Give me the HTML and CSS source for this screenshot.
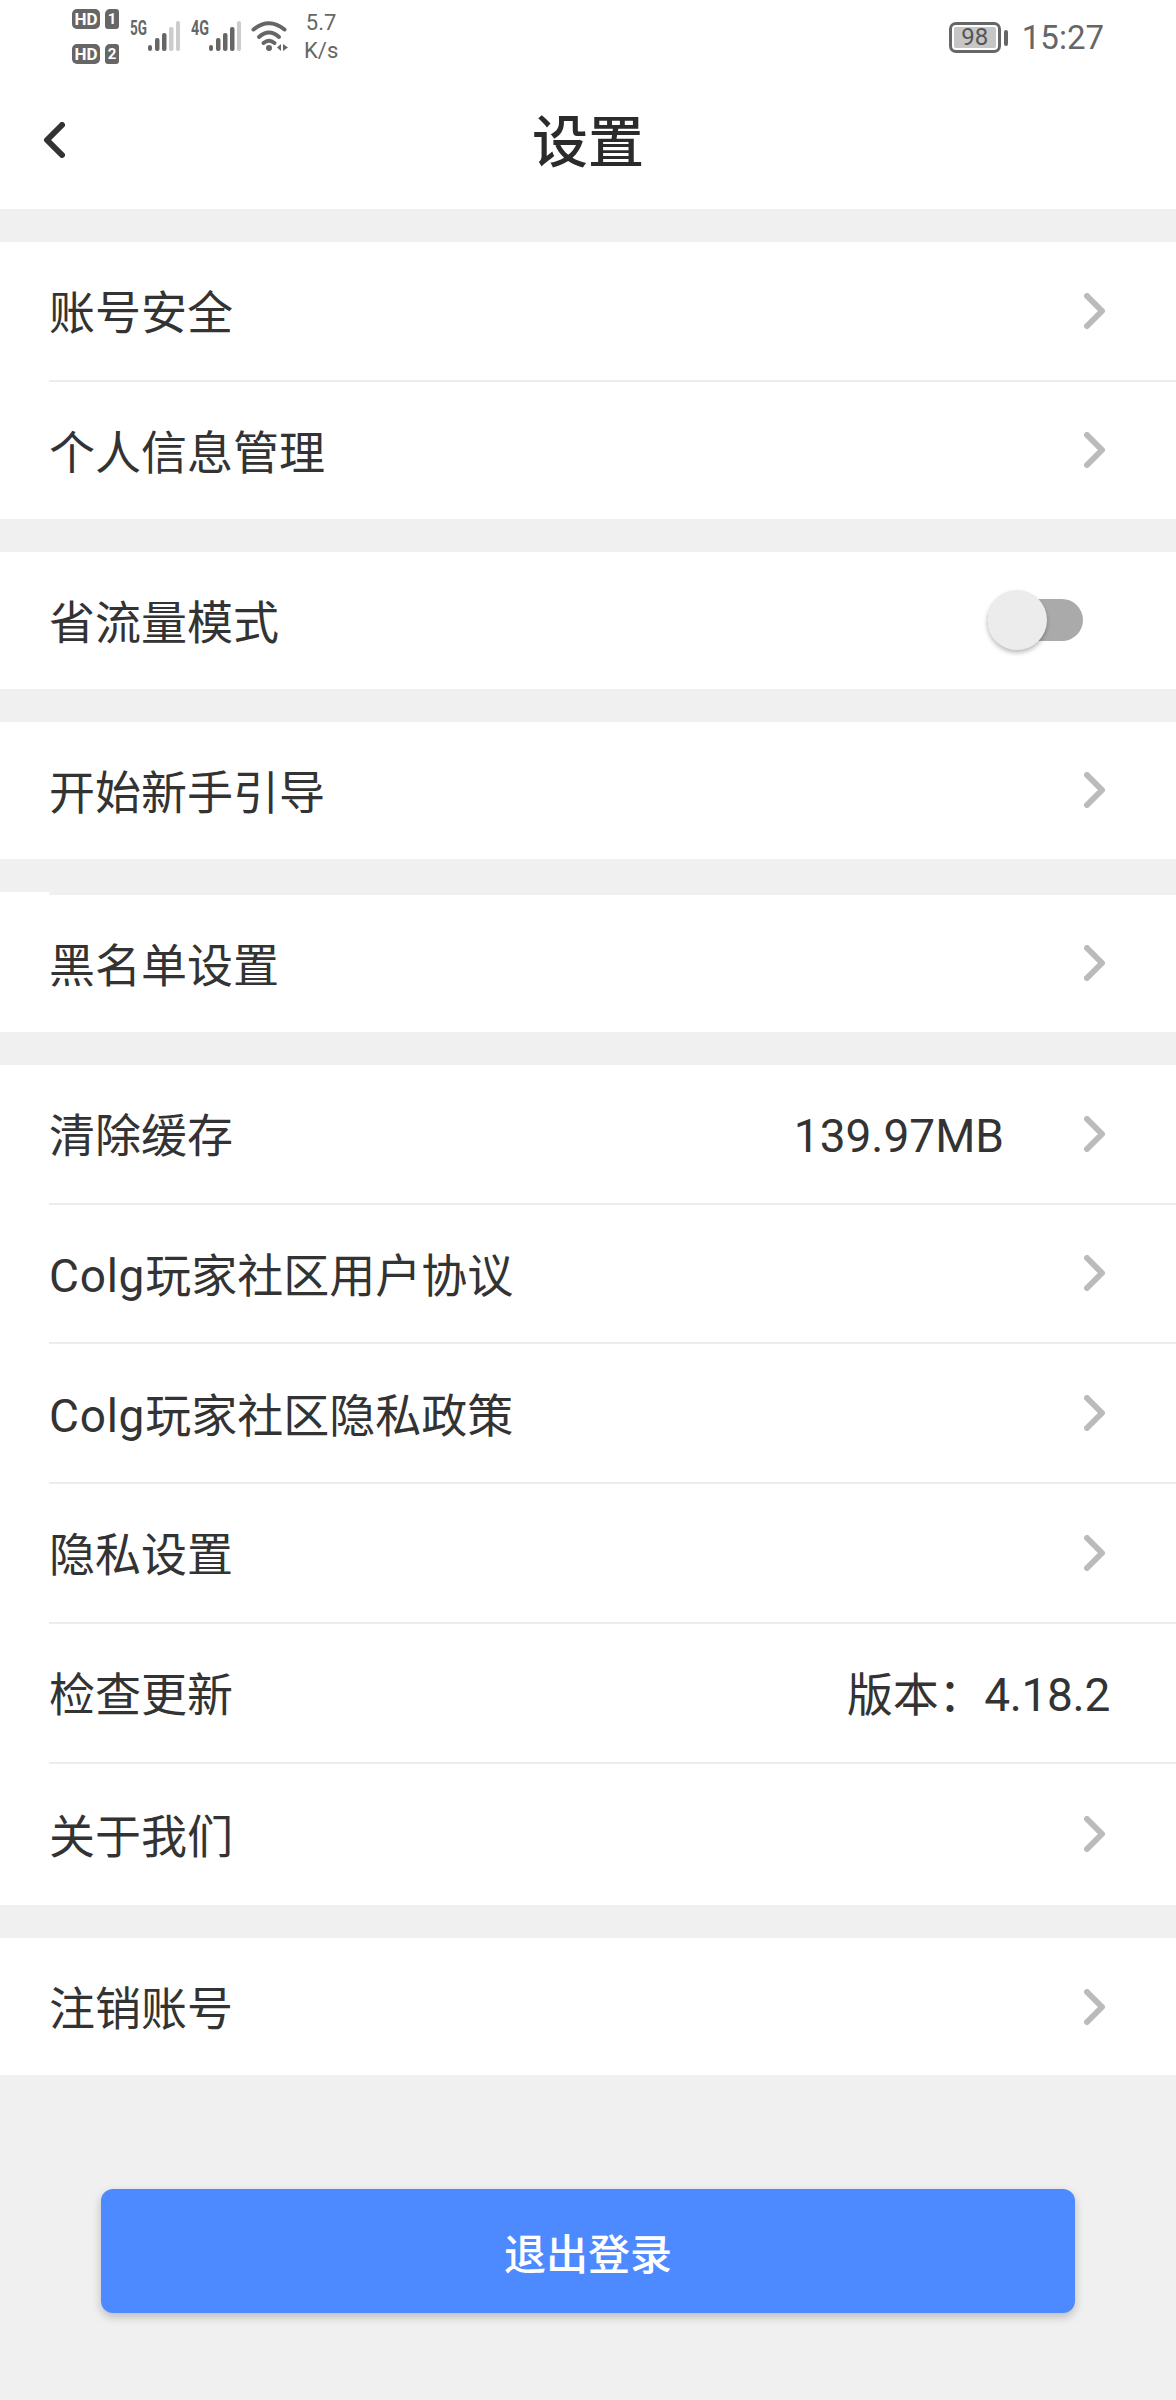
FILE: index.html
```html
<!DOCTYPE html>
<html lang="zh-CN">
<head>
<meta charset="utf-8">
<title>设置</title>
<link rel="stylesheet" href="styles.css">
</head>
<body>
<div class="page">
  <header class="top">
    <div class="status">
      <div class="sims">
        <div class="sim"><span class="hd">HD</span><span class="num">1</span></div>
        <div class="sim"><span class="hd">HD</span><span class="num">2</span></div>
      </div>
      <svg class="signal" width="50" height="40" viewBox="0 -6 50 40">
        <text class="net" x="0" y="15" textLength="17" lengthAdjust="spacingAndGlyphs">5G</text>
        <rect class="on" x="18" y="25" width="4" height="6" rx="2"/>
        <rect class="on" x="25" y="18" width="4.5" height="13" rx="2"/>
        <rect class="on" x="32" y="13" width="4.5" height="18" rx="2"/>
        <rect class="off" x="39" y="7" width="4.5" height="24" rx="2"/>
        <rect class="off" x="46" y="1" width="4" height="30" rx="2"/>
      </svg>
      <svg class="signal second" width="50" height="40" viewBox="0 -6 50 40">
        <text class="net" x="0" y="15" textLength="18" lengthAdjust="spacingAndGlyphs">4G</text>
        <rect class="on" x="18" y="25" width="4" height="6" rx="2"/>
        <rect class="on" x="25" y="18" width="4.5" height="13" rx="2"/>
        <rect class="on" x="32" y="13" width="4.5" height="18" rx="2"/>
        <rect class="on" x="39" y="7" width="4.5" height="24" rx="2"/>
        <rect class="off" x="46" y="1" width="4" height="30" rx="2"/>
      </svg>
      <svg class="wifi" width="38" height="34" viewBox="0 0 38 34">
        <path class="arc" d="M2.5 9.5Q18 -3 33.5 9.5"/>
        <path class="arc" d="M8 17Q18 8 28 17"/>
        <path class="arc" d="M12.5 23Q18 18.5 23.5 23"/>
        <circle class="dot" cx="18" cy="28" r="3"/>
        <path class="dot" d="M30 24v7l-4-3.5zM32 24v7l5-3.5z"/>
      </svg>
      <div class="speed"><span>5.7</span><span>K/s</span></div>
      <div class="status-right">
        <div class="battery"><span class="level">98</span></div>
        <span class="nub"></span>
        <span class="time">15:27</span>
      </div>
    </div>
    <nav class="nav">
      <svg class="back" width="22" height="36" viewBox="0 0 22 36"><path d="M19 3L4 18L19 33"/></svg>
      <h1 class="title">设置</h1>
      <span></span>
    </nav>
  </header>

  <section class="group">
    <div class="row"><span class="label">账号安全</span><svg class="chev" width="22" height="36" viewBox="0 0 22 36"><path d="M3 3L18 18L3 33"/></svg></div>
    <div class="row"><span class="label">个人信息管理</span><svg class="chev" width="22" height="36" viewBox="0 0 22 36"><path d="M3 3L18 18L3 33"/></svg></div>
  </section>

  <section class="group">
    <div class="row"><span class="label">省流量模式</span><span class="switch"><span class="knob"></span></span></div>
  </section>

  <section class="group">
    <div class="row"><span class="label">开始新手引导</span><svg class="chev" width="22" height="36" viewBox="0 0 22 36"><path d="M3 3L18 18L3 33"/></svg></div>
  </section>

  <section class="group notched">
    <div class="row"><span class="label">黑名单设置</span><svg class="chev" width="22" height="36" viewBox="0 0 22 36"><path d="M3 3L18 18L3 33"/></svg></div>
  </section>

  <section class="group long">
    <div class="row"><span class="label">清除缓存</span><span class="value cache">139.97MB</span><svg class="chev" width="22" height="36" viewBox="0 0 22 36"><path d="M3 3L18 18L3 33"/></svg></div>
    <div class="row"><span class="label"><span class="latin">Colg</span>玩家社区用户协议</span><svg class="chev" width="22" height="36" viewBox="0 0 22 36"><path d="M3 3L18 18L3 33"/></svg></div>
    <div class="row"><span class="label"><span class="latin">Colg</span>玩家社区隐私政策</span><svg class="chev" width="22" height="36" viewBox="0 0 22 36"><path d="M3 3L18 18L3 33"/></svg></div>
    <div class="row"><span class="label">隐私设置</span><svg class="chev" width="22" height="36" viewBox="0 0 22 36"><path d="M3 3L18 18L3 33"/></svg></div>
    <div class="row"><span class="label">检查更新</span><span class="value version">版本：4.18.2</span></div>
    <div class="row"><span class="label">关于我们</span><svg class="chev" width="22" height="36" viewBox="0 0 22 36"><path d="M3 3L18 18L3 33"/></svg></div>
  </section>

  <section class="group">
    <div class="row"><span class="label">注销账号</span><svg class="chev" width="22" height="36" viewBox="0 0 22 36"><path d="M3 3L18 18L3 33"/></svg></div>
  </section>

  <div class="actions"><button class="logout" type="button">退出登录</button></div>
</div>
</body>
</html>
```

FILE: styles.css
```css
* { box-sizing: border-box; }
html, body { margin: 0; padding: 0; }
body {
  font-family: Roboto, "Noto Sans CJK SC", sans-serif;
  color: #333;
  background: #f0f0f0;
}
.page { width: 1176px; height: 2400px; overflow: hidden; background: #f0f0f0; }

.top { height: 209px; background: #fff; }
.status {
  height: 80px;
  padding: 0 72px 0 72px;
  display: flex;
  align-items: flex-start;
  color: #666;
}
.sims { display: flex; flex-direction: column; gap: 15px; margin-top: 9px; }
.sim { display: flex; gap: 5px; height: 20px; }
.hd {
  width: 28px; height: 20px;
  border-radius: 5px;
  background: #666; color: #fff;
  font: 700 17px/20px Roboto, sans-serif;
  text-align: center;
}
.num {
  width: 14px; height: 20px;
  border-radius: 5px 3px 3px 3px;
  background: #666; color: #fff;
  font: 700 15px/20px Roboto, sans-serif;
  text-align: center;
}
.signal { margin-top: 14px; margin-left: 11px; }
.signal.second { margin-left: 11px; }
.net { font: 700 21px Roboto, sans-serif; fill: #666; }
.on { fill: #666; }
.off { fill: #ccc; }
.wifi { margin-top: 20px; margin-left: 10px; }
.arc { fill: none; stroke: #666; stroke-width: 4; stroke-linecap: round; }
.dot { fill: #666; }
.speed {
  display: flex; flex-direction: column;
  margin-left: 15px; margin-top: 9px;
  font: 400 22px/28px Roboto, sans-serif;
  text-align: center;
}
.status-right { margin-left: auto; display: flex; align-items: center; margin-top: 22px; }
.battery {
  width: 52px; height: 31px;
  border: 3px solid #666;
  border-radius: 7px;
  padding: 2px;
  display: flex;
}
.level {
  flex: 1;
  background: #c6c6c6;
  border-radius: 2px;
  font: 400 24px/21px Roboto, sans-serif;
  color: #555;
  text-align: center;
}
.nub { width: 4px; height: 16px; margin-left: 3px; background: #666; border-radius: 2px; }
.time { margin-left: 14px; font: 400 33px/31px Roboto, sans-serif; color: #666; }

.nav {
  height: 129px;
  padding: 0 0 3px 44px;
  display: grid;
  grid-template-columns: 1fr auto 1fr;
  align-items: center;
}
.back { margin-left: -1px; margin-bottom: 6px; }
.back path { fill: none; stroke: #333; stroke-width: 6; stroke-linecap: round; stroke-linejoin: round; }
.title { margin: 0; font-size: 56px; line-height: 70px; font-weight: 500; color: #2b2b2b; transform: translateX(-22px); }

.group { margin-top: 33px; background: #fff; position: relative; }
.notched { margin-top: 36px; }
.notched::before {
  content: "";
  position: absolute;
  left: 0; top: -3px;
  width: 49px; height: 3px;
  background: #fff;
}
.row {
  height: 139.75px;
  margin-left: 49px;
  padding-right: 70px;
  display: flex;
  align-items: center;
  border-bottom: 2px solid #ececec;
}
.row:last-child { height: 137px; border-bottom: 0; }
.long .row:last-child { height: 141.5px; }
.label { flex: 1; padding-top: 5px; font-size: 46px; line-height: 60px; white-space: nowrap; }
.latin { letter-spacing: .75px; }
.value { padding-top: 5px; font-size: 46px; line-height: 60px; white-space: nowrap; }
.cache { margin-right: 80px; }
.version { margin-right: -4px; letter-spacing: -.3px; }
.chev path { fill: none; stroke: #bbb; stroke-width: 6; stroke-linecap: round; stroke-linejoin: round; }

.switch {
  position: relative;
  width: 96px; height: 42px;
  background: #aaa;
  border-radius: 21px;
  display: block;
  margin-right: 23px;
}
.knob {
  position: absolute;
  left: 0; top: -9px;
  width: 60px; height: 60px;
  border-radius: 50%;
  background: #ececec;
  box-shadow: 0 3px 4px rgba(0,0,0,.25);
}

.actions { margin-top: 114px; padding: 0 101px; }
.logout {
  display: block;
  width: 974px; height: 124px;
  border: 0;
  border-radius: 12px;
  background: #4e8aff;
  color: #fff;
  font-family: inherit;
  font-size: 42px;
  font-weight: 500;
  box-shadow: 0 4px 10px rgba(0,0,0,.22);
}
```
